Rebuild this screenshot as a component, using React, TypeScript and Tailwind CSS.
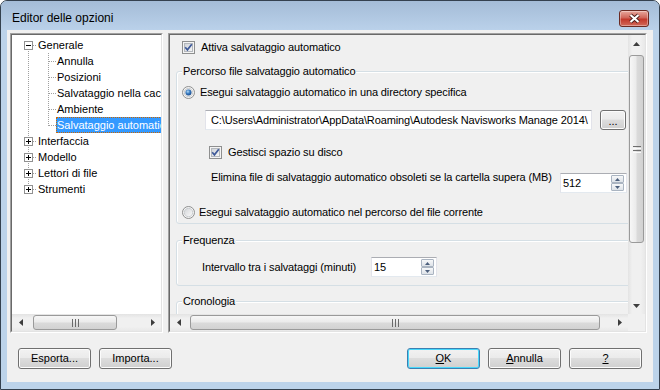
import React from "react";

type TreeNode = {
  label: string;
  level: 0 | 1;
  box?: "plus" | "minus";
  first?: boolean;
  last?: boolean;
  selected?: boolean;
};

const TREE: TreeNode[] = [
  { label: "Generale", level: 0, box: "minus", first: true },
  { label: "Annulla", level: 1 },
  { label: "Posizioni", level: 1 },
  { label: "Salvataggio nella cache", level: 1 },
  { label: "Ambiente", level: 1 },
  { label: "Salvataggio automatico", level: 1, last: true, selected: true },
  { label: "Interfaccia", level: 0, box: "plus" },
  { label: "Modello", level: 0, box: "plus" },
  { label: "Lettori di file", level: 0, box: "plus" },
  { label: "Strumenti", level: 0, box: "plus", last: true },
];

const DOT = { stroke: "#a0a0a0", strokeDasharray: "1 1", shapeRendering: "crispEdges" as const };

function TreeRow({ n }: { n: TreeNode }) {
  return (
    <div className="flex h-[16px]">
      <svg width="25" height="16" className="shrink-0">
        {n.level === 0 ? (
          <>
            <line x1="16.5" y1={n.first ? 8 : 0} x2="16.5" y2={n.last ? 8 : 16} {...DOT} />
            <line x1="21" y1="8.5" x2="25" y2="8.5" {...DOT} />
            <rect x="12.5" y="4.5" width="8" height="8" fill="#fff" stroke="#919191" shapeRendering="crispEdges" />
            <line x1="14" y1="8.5" x2="19" y2="8.5" stroke="#000" shapeRendering="crispEdges" />
            {n.box === "plus" && <line x1="16.5" y1="6" x2="16.5" y2="11" stroke="#000" shapeRendering="crispEdges" />}
          </>
        ) : (
          <line x1="16.5" y1="0" x2="16.5" y2="16" {...DOT} />
        )}
      </svg>
      {n.level === 1 && (
        <svg width="19" height="16" className="shrink-0">
          <line x1="11.5" y1="0" x2="11.5" y2={n.last ? 9 : 16} {...DOT} />
          <line x1="12" y1="8.5" x2="19" y2="8.5" {...DOT} />
        </svg>
      )}
      <div
        className={`shrink-0 whitespace-nowrap leading-[14px] border ${
          n.selected ? "bg-[#3399ff] text-white border-dotted border-[#cc6600]" : "border-transparent"
        }`}
      >
        {n.label}
      </div>
    </div>
  );
}

function Check() {
  return (
    <svg width="13" height="13" viewBox="0 0 13 13" className="shrink-0">
      <defs>
        <linearGradient id="cbin" x1="0" y1="0" x2="1" y2="1">
          <stop offset="0" stopColor="#cdd1d7" />
          <stop offset="1" stopColor="#f7f7f7" />
        </linearGradient>
      </defs>
      <rect x="0.5" y="0.5" width="12" height="12" fill="#f4f4f4" stroke="#8e8f8f" shapeRendering="crispEdges" />
      <rect x="2.5" y="2.5" width="8" height="8" fill="url(#cbin)" stroke="#b4b8bd" shapeRendering="crispEdges" />
      <path d="M3.2 6.3 L5.4 8.8 L9.8 3.2" fill="none" stroke="#3f5a99" strokeWidth="1.7" />
    </svg>
  );
}

function Radio({ checked }: { checked?: boolean }) {
  return (
    <svg width="13" height="13" viewBox="0 0 13 13" className="shrink-0">
      <defs>
        <linearGradient id="rbg" x1="0" y1="0" x2="1" y2="1">
          <stop offset="0" stopColor="#d3d5d8" />
          <stop offset="1" stopColor="#fbfbfb" />
        </linearGradient>
        <radialGradient id="rdot" cx="0.4" cy="0.35" r="0.75">
          <stop offset="0" stopColor="#b4dcf7" />
          <stop offset="0.45" stopColor="#3a7cc2" />
          <stop offset="1" stopColor="#12407e" />
        </radialGradient>
      </defs>
      <circle cx="6.5" cy="6.5" r="6" fill="#f4f4f4" stroke="#8e8f8f" />
      <circle cx="6.5" cy="6.5" r="4.2" fill="url(#rbg)" stroke="#c2c5c9" strokeWidth="0.8" />
      {checked && <circle cx="6.5" cy="6.5" r="3" fill="url(#rdot)" />}
    </svg>
  );
}

function Spin({ value, w }: { value: string; w: string }) {
  return (
    <div
      className={`${w} h-[20px] shrink-0 flex bg-white border border-t-[#abadb3] border-x-[#e2e3ea] border-b-[#e3e9ef]`}
    >
      <div className="flex-1 pl-[2px] leading-[18px]">{value}</div>
      <div className="flex flex-col w-[13px] h-[16px] my-auto mr-[2px]">
        {[true, false].map((up) => (
          <div
            key={String(up)}
            className="h-[8px] border border-[#aab4c1] rounded-[1px] bg-gradient-to-b from-[#f7f8f9] to-[#dde2e8] flex items-center justify-center"
          >
            <svg width="5" height="3">
              <path d={up ? "M0 3 L2.5 0 L5 3Z" : "M0 0 L2.5 3 L5 0Z"} fill="#4c5f7c" />
            </svg>
          </div>
        ))}
      </div>
    </div>
  );
}

function Arrow({ dir }: { dir: "up" | "down" | "left" | "right" }) {
  const d = {
    up: "M0 4 L3.5 0 L7 4Z",
    down: "M0 0 L3.5 4 L7 0Z",
    left: "M4 0 L0 3.5 L4 7Z",
    right: "M0 0 L4 3.5 L0 7Z",
  }[dir];
  const vert = dir === "up" || dir === "down";
  return (
    <div className="w-[17px] h-[17px] shrink-0 flex items-center justify-center">
      <svg width={vert ? 7 : 4} height={vert ? 4 : 7}>
        <path d={d} fill="#3d3d3d" />
      </svg>
    </div>
  );
}

function Grip({ vertical }: { vertical?: boolean }) {
  return vertical ? (
    <svg width="8" height="7">
      {[0, 2, 4, 6].map((y) => (
        <line key={y} x1="0" y1={y + 0.5} x2="8" y2={y + 0.5} stroke={y % 4 === 0 ? "#6e6e6e" : "#fafafa"} />
      ))}
    </svg>
  ) : (
    <svg width="7" height="8">
      {[0, 3, 6].map((x) => (
        <line key={x} x1={x + 0.5} y1="0" x2={x + 0.5} y2="8" stroke="#6a6a6a" />
      ))}
    </svg>
  );
}

function HScroll({ thumbLeft, thumbW }: { thumbLeft: string; thumbW: string }) {
  return (
    <div className="h-[17px] flex bg-[linear-gradient(#e3e3e3,#f0f0f0_25%,#f0f0f0_75%,#e8e8e8)]">
      <Arrow dir="left" />
      <div className="flex-1 min-w-0 flex items-center">
        <div
          className={`${thumbLeft} ${thumbW} h-[15px] shrink-0 rounded-[3px] border border-[#9a9a9a] bg-[linear-gradient(#f7f7f7,#ebebeb_45%,#dadada_55%,#d2d2d2)] flex items-center justify-center`}
        >
          <Grip />
        </div>
      </div>
      <Arrow dir="right" />
    </div>
  );
}

function Btn({ children, w, def }: { children: React.ReactNode; w: string; def?: boolean }) {
  return (
    <div
      className={`${w} h-[21px] rounded-[3px] border flex items-center justify-center bg-[linear-gradient(#f2f2f2,#ebebeb_45%,#dddddd_50%,#cfcfcf)] ${
        def
          ? "border-[#3c7fb1] shadow-[inset_0_0_0_1px_#48d8fb]"
          : "border-[#707070] shadow-[inset_0_0_0_1px_#fcfcfc]"
      }`}
    >
      {children}
    </div>
  );
}

function Group({ title, children }: { title: string; children: React.ReactNode }) {
  return (
    <div className="ml-[6px] w-[540px] rounded-[3px] border border-[#d5dfe5] shadow-[inset_1px_1px_0_#fff]">
      <div className="-mt-[7px] ml-[5px] px-[1px] w-fit bg-[#f0f0f0] leading-[13px]">{title}</div>
      {children}
    </div>
  );
}

export default function App() {
  return (
    <div className="w-[660px] h-[390px] flex flex-col rounded-t-[7px] border border-[#34414f] bg-[#bcd3ea] overflow-hidden font-['Liberation_Sans',Arial,sans-serif] text-[11px] text-black">
      {/* title bar */}
      <div className="h-[29px] shrink-0 flex bg-gradient-to-b from-[#a4bcd7] to-[#bad1ea]">
        <div className="mt-[10px] ml-[11px] leading-[15px] text-[12px]">Editor delle opzioni</div>
        <div className="ml-auto mr-[10px] mt-[9px] w-[30px] h-[17px] rounded-[3px] border border-[#6b2a22] bg-[linear-gradient(#e8a89d,#d0665a_45%,#c2382b_55%,#d26a5a)] shadow-[inset_0_0_0_1px_rgba(255,255,255,0.35)] flex items-center justify-center">
          <svg width="13" height="11" viewBox="0 0 13 11">
            <path d="M2.5 2 L10.5 9 M10.5 2 L2.5 9" stroke="#4a1f1c" strokeWidth="3.8" />
            <path d="M2.5 2 L10.5 9 M10.5 2 L2.5 9" stroke="#fff" strokeWidth="2.1" />
          </svg>
        </div>
      </div>

      {/* client */}
      <div className="flex-1 px-[6px] pb-[7px] min-h-0">
        <div className="h-full bg-[#f0f0f0] flex flex-col">
          <div className="flex gap-[5px] pt-[3px] pl-[3px]">
            {/* tree */}
            <div className="w-[153px] h-[300px] border border-t-[#a0a0a0] border-l-[#a0a0a0] border-b-white border-r-white">
              <div className="h-full border border-t-[#696969] border-l-[#696969] border-b-[#e3e3e3] border-r-[#e3e3e3] bg-white flex flex-col">
                <div className="flex-1 min-h-0 overflow-hidden pt-[2px]">
                  {TREE.map((n) => (
                    <TreeRow key={n.label} n={n} />
                  ))}
                </div>
                <HScroll thumbLeft="ml-[4px]" thumbW="w-[84px]" />
              </div>
            </div>

            {/* options panel */}
            <div className="w-[479px] h-[300px] border border-t-[#a0a0a0] border-l-[#a0a0a0] border-b-white border-r-white">
              <div className="h-full border border-t-[#696969] border-l-[#696969] border-b-[#e3e3e3] border-r-[#e3e3e3] flex flex-col">
                <div className="flex-1 min-h-0 flex">
                  <div className="flex-1 min-w-0 overflow-hidden tracking-[-0.12px]">
                    <div className="w-[560px]">
                      <div className="mt-[6px] ml-[12px] h-[13px] flex items-center gap-[6px]">
                        <Check />
                        <span className="leading-[13px]">Attiva salvataggio automatico</span>
                      </div>

                      <div className="mt-[17px]">
                        <Group title="Percorso file salvataggio automatico">
                          <div className="mt-[8px] pl-[5px] h-[13px] flex items-center gap-[5px]">
                            <Radio checked />
                            <span className="leading-[13px]">Esegui salvataggio automatico in una directory specifica</span>
                          </div>
                          <div className="mt-[11px] pl-[28px] flex gap-[8px]">
                            <div className="w-[387px] h-[20px] bg-white border border-t-[#abadb3] border-x-[#e2e3ea] border-b-[#e3e9ef] pl-[5px] leading-[18px] whitespace-nowrap overflow-hidden">
                              C:\Users\Administrator\AppData\Roaming\Autodesk Navisworks Manage 2014\
                            </div>
                            <div className="w-[26px] h-[20px] rounded-[3px] border border-[#707070] shadow-[inset_0_0_0_1px_#fcfcfc] bg-[linear-gradient(#f2f2f2,#ebebeb_45%,#dddddd_50%,#cfcfcf)] flex items-end justify-center pb-[3px] leading-[10px]">
                              ...
                            </div>
                          </div>
                          <div className="mt-[16px] pl-[32px] h-[13px] flex items-center gap-[6px]">
                            <Check />
                            <span className="leading-[13px]">Gestisci spazio su disco</span>
                          </div>
                          <div className="mt-[14px] pl-[34px] flex">
                            <div className="w-[349px] -mt-[2px] leading-[13px] whitespace-nowrap">
                              Elimina file di salvataggio automatico obsoleti se la cartella supera (MB)
                            </div>
                            <Spin value="512" w="w-[67px]" />
                          </div>
                          <div className="mt-[13px] pl-[5px] pb-[4px] flex items-center gap-[4px]">
                            <Radio />
                            <span className="leading-[13px]">Esegui salvataggio automatico nel percorso del file corrente</span>
                          </div>
                        </Group>
                      </div>

                      <div className="mt-[16px]">
                        <Group title="Frequenza">
                          <div className="mt-[10px] pl-[25px] pb-[8px] flex items-center">
                            <div className="w-[169px] leading-[13px] whitespace-nowrap">Intervallo tra i salvataggi (minuti)</div>
                            <Spin value="15" w="w-[66px]" />
                          </div>
                        </Group>
                      </div>

                      <div className="mt-[15px]">
                        <Group title="Cronologia">
                          <div className="h-[40px]" />
                        </Group>
                      </div>
                    </div>
                  </div>

                  {/* vertical scrollbar */}
                  <div className="w-[17px] shrink-0 flex flex-col bg-[linear-gradient(90deg,#e3e3e3,#f0f0f0_25%,#f0f0f0_75%,#e8e8e8)]">
                    <Arrow dir="up" />
                    <div className="flex-1 flex justify-center">
                      <div className="mt-[3px] w-[15px] h-[188px] rounded-[3px] border border-[#9a9a9a] bg-[linear-gradient(90deg,#f7f7f7,#ebebeb_45%,#dadada_55%,#d2d2d2)] flex items-center justify-center">
                        <Grip vertical />
                      </div>
                    </div>
                    <Arrow dir="down" />
                  </div>
                </div>
                <div className="flex">
                  <div className="flex-1 min-w-0">
                    <HScroll thumbLeft="ml-[3px]" thumbW="w-[410px]" />
                  </div>
                  <div className="w-[17px] h-[17px] bg-[#f0f0f0]" />
                </div>
              </div>
            </div>
          </div>

          {/* buttons */}
          <div className="mt-[15px] px-[11px] flex justify-between">
            <div className="flex gap-[8px]">
              <Btn w="w-[73px]">Esporta...</Btn>
              <Btn w="w-[73px]">Importa...</Btn>
            </div>
            <div className="flex gap-[8px]">
              <Btn w="w-[73px]" def>
                <span>
                  <u>O</u>K
                </span>
              </Btn>
              <Btn w="w-[73px]">
                <span>
                  <u>A</u>nnulla
                </span>
              </Btn>
              <Btn w="w-[73px]">
                <u>?</u>
              </Btn>
            </div>
          </div>
        </div>
      </div>
    </div>
  );
}
